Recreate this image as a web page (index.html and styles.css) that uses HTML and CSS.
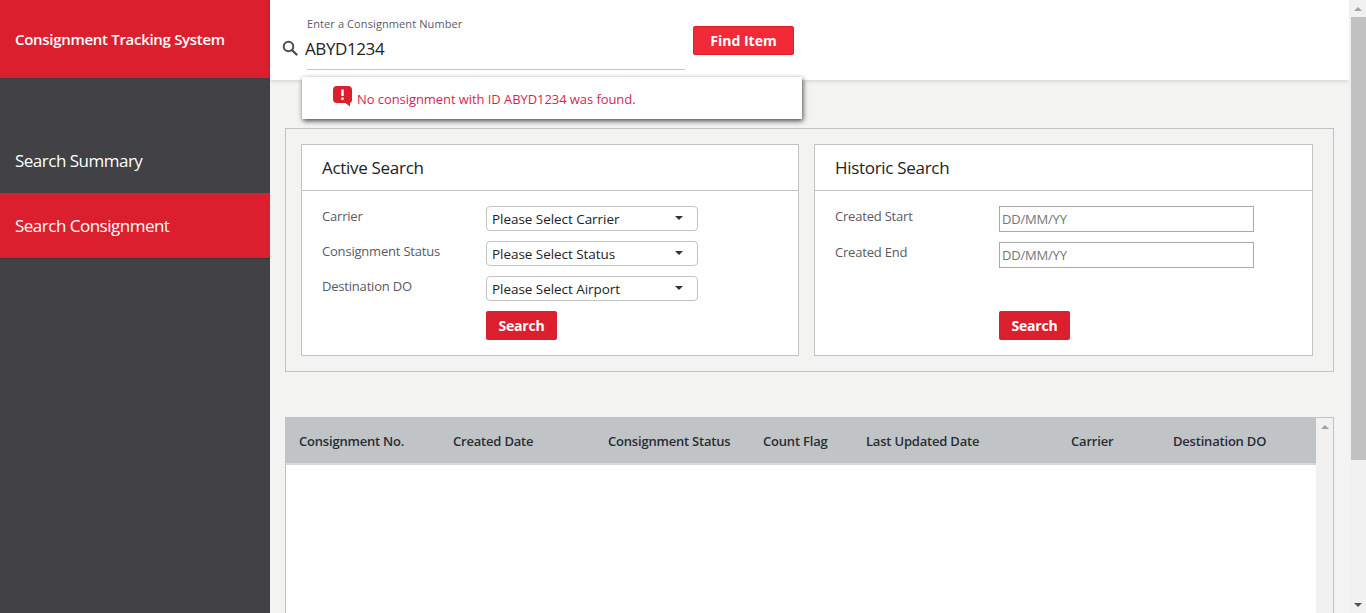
FILE: index.html
```html
<!DOCTYPE html>
<html>

<head>
   <title>Consignment Tracking System</title>
   <link rel="stylesheet" href="styles.css">
</head>

<body>
   <div class="sidebar">
      <div class="brand">Consignment Tracking System</div>
      <div class="nav">
         <a class="nav-item">Search Summary</a>
         <a class="nav-item active">Search Consignment</a>
      </div>
   </div>

   <div class="main">
      <div class="topbar">
         <div class="finder">
            <label class="finder-label" for="consignment">Enter a Consignment Number</label>
            <div class="finder-row">
               <svg class="finder-icon" width="16" height="16" viewBox="0 0 16 16">
                  <circle cx="6.5" cy="6.5" r="4.8" fill="none" stroke="#4a4f55" stroke-width="2" />
                  <path d="M10 10l4.5 4.5" stroke="#4a4f55" stroke-width="2.4" stroke-linecap="round" />
               </svg>
               <input class="finder-input" id="consignment" type="text" value="ABYD1234">
            </div>
            <div class="finder-line"></div>
         </div>
         <button class="btn-find">Find Item</button>
      </div>

      <div class="error-popup">
         <svg class="error-icon" width="19" height="21" viewBox="0 0 19 21">
            <path d="M4 0h11a4 4 0 0 1 4 4v10a3 3 0 0 1-2 3v3.5l-4.500-3.500h-8.500a4 4 0 0 1-4-4v-9a4 4 0 0 1 4-4z" fill="#dc1f2e" />
            <path d="M9.500 3.500v6.500" stroke="#fff" stroke-width="2.400" />
            <rect x="8.300" y="11.500" width="2.400" height="2.400" fill="#fff" />
         </svg>
         <span>No consignment with ID ABYD1234 was found.</span>
      </div>

      <div class="content">
         <div class="search-panel">
            <div class="card">
               <h2 class="card-title">Active Search</h2>
               <div class="card-body">
                  <div class="field">
                     <label>Carrier</label>
                     <div class="select-wrap"><select><option>Please Select Carrier</option></select></div>
                  </div>
                  <div class="field">
                     <label>Consignment Status</label>
                     <div class="select-wrap"><select><option>Please Select Status</option></select></div>
                  </div>
                  <div class="field">
                     <label>Destination DO</label>
                     <div class="select-wrap"><select><option>Please Select Airport</option></select></div>
                  </div>
                  <button class="btn-search">Search</button>
               </div>
            </div>

            <div class="card">
               <h2 class="card-title">Historic Search</h2>
               <div class="card-body">
                  <div class="field">
                     <label>Created Start</label>
                     <input class="date-input" type="text" placeholder="DD/MM/YY">
                  </div>
                  <div class="field">
                     <label>Created End</label>
                     <input class="date-input" type="text" placeholder="DD/MM/YY">
                  </div>
                  <button class="btn-search">Search</button>
               </div>
            </div>
         </div>

         <div class="results">
            <div class="results-table">
               <table>
                  <thead>
                     <tr>
                        <th class="col-number">Consignment No.</th>
                        <th class="col-created">Created Date</th>
                        <th class="col-status">Consignment Status</th>
                        <th class="col-flag">Count Flag</th>
                        <th class="col-updated">Last Updated Date</th>
                        <th class="col-carrier">Carrier</th>
                        <th>Destination DO</th>
                     </tr>
                  </thead>
               </table>
            </div>
            <div class="scrollbar inner-scroll">
               <span class="arrow-up"></span>
            </div>
         </div>
      </div>
   </div>

   <div class="scrollbar page-scroll">
      <span class="arrow-up"></span>
      <div class="thumb"></div>
      <span class="arrow-down"></span>
   </div>
</body>

</html>
```

FILE: styles.css
```css
html,
body {
   height: 100%;
}

body {
   margin: 0;
   display: flex;
   overflow: hidden;
   background: #f3f3f2;
   color: #222;
   font-family: "Open Sans", "Noto Sans", sans-serif;
   font-size: 13px;
}

/* sidebar */
.sidebar {
   width: 270px;
   flex: none;
   background: #414146;
}

.brand {
   height: 78px;
   padding-left: 15px;
   display: flex;
   align-items: center;
   background: #dc1f2e;
   color: #fff;
   font-size: 15px;
   font-weight: 600;
   letter-spacing: -.3px;
}

.nav {
   padding-top: 50px;
}

.nav-item {
   height: 65px;
   padding-left: 15px;
   display: flex;
   align-items: center;
   color: #fff;
   font-size: 17px;
   letter-spacing: -.5px;
}

.nav-item.active {
   background: #dc1f2e;
   box-shadow: 0 1px 0 #38383c;
}

/* top bar */
.main {
   flex: 1;
   min-width: 0;
   position: relative;
   display: flex;
   flex-direction: column;
}

.topbar {
   height: 80px;
   flex: none;
   display: flex;
   background: #fff;
   box-shadow: 0 1px 4px rgba(0, 0, 0, .15);
}

.finder {
   width: 423px;
   padding: 16px 0 0 12px;
   box-sizing: border-box;
}

.finder-label {
   display: block;
   margin-left: 25px;
   height: 15px;
   line-height: 15px;
   font-size: 11px;
   letter-spacing: .1px;
   color: #5a5a64;
}

.finder-row {
   height: 26px;
   margin-top: 4px;
   display: flex;
   align-items: center;
}

.finder-icon {
   flex: none;
   margin-right: 7px;
}

.finder-input {
   width: 380px;
   padding: 0;
   border: 0;
   outline: 0;
   background: none;
   font-family: inherit;
   font-size: 17px;
   letter-spacing: -.4px;
   color: #222;
}

.finder-line {
   height: 1px;
   margin: 8px 0 0 25px;
   width: 378px;
   background: #c4c4c4;
}

.btn-find {
   width: 101px;
   height: 29px;
   margin: 26px 0 0 0;
   padding: 0;
   background: #f22937;
   border: 1px solid #dc1f2e;
   border-radius: 2px;
   color: #fff;
   font-family: inherit;
   font-size: 14px;
   font-weight: 700;
}

.error-popup {
   position: absolute;
   left: 32px;
   top: 77px;
   width: 500px;
   height: 42px;
   padding: 1px 0 0 31px;
   box-sizing: border-box;
   display: flex;
   align-items: center;
   background: #fff;
   color: #d81f4f;
   font-size: 13px;
   letter-spacing: -.07px;
   box-shadow: 1px 2px 5px rgba(0, 0, 0, .7);
}

.error-icon {
   flex: none;
   margin: -5px 5px 0 0;
}

/* search cards */
.content {
   flex: 1;
   min-height: 0;
   padding: 48px 15px 0;
   display: flex;
   flex-direction: column;
}

.search-panel {
   height: 244px;
   flex: none;
   padding: 15px;
   box-sizing: border-box;
   border: 1px solid #c0c4c6;
   display: grid;
   grid-template-columns: 498px 499px;
   grid-template-rows: 212px;
   column-gap: 15px;
}

.card {
   display: flex;
   flex-direction: column;
   background: #fff;
   border: 1px solid #c0c4c6;
   box-sizing: border-box;
}

.card-title {
   height: 45px;
   margin: 0;
   padding-left: 20px;
   display: flex;
   align-items: center;
   flex: none;
   border-bottom: 1px solid #c0c4c6;
   font-size: 17px;
   font-weight: 500;
   letter-spacing: -.3px;
   color: #222;
}

.card-body {
   flex: 1;
   padding: 15px 20px;
   display: flex;
   flex-direction: column;
   gap: 10px;
}

.field {
   display: flex;
   align-items: flex-start;
}

.field label {
   width: 164px;
   flex: none;
   height: 20px;
   line-height: 20px;
   color: #5a5a64;
   letter-spacing: -.2px;
}

.select-wrap {
   position: relative;
   width: 212px;
}

.select-wrap::after {
   content: "";
   position: absolute;
   right: 15px;
   top: 10px;
   border-style: solid;
   border-width: 4px 4px 0;
   border-color: #333 transparent transparent;
   pointer-events: none;
}

.select-wrap select {
   display: block;
   width: 100%;
   height: 25px;
   padding: 0 0 0 5px;
   appearance: none;
   background: #fff;
   border: 1px solid #c4c4c4;
   border-radius: 4px;
   font-family: inherit;
   font-size: 13.500px;
   letter-spacing: -.05px;
   color: #222;
}

.date-input {
   width: 255px;
   height: 26px;
   padding: 0 2px;
   box-sizing: border-box;
   border: 1px solid #a9a9a9;
   font-family: inherit;
   font-size: 13px;
   letter-spacing: -.2px;
}

.date-input::placeholder {
   color: #757575;
   opacity: 1;
}

.btn-search {
   height: 29px;
   width: 71px;
   margin-top: auto;
   margin-left: 164px;
   padding: 0;
   background: #dc1f2e;
   border: 0;
   border-radius: 2px;
   color: #fff;
   font-family: inherit;
   font-size: 14px;
   font-weight: 700;
   letter-spacing: -.2px;
}

/* results */
.results {
   flex: 1;
   min-height: 0;
   margin-top: 45px;
   display: flex;
   border: 1px solid #c0c4c6;
   border-bottom: 0;
   background: #fff;
}

.results-table {
   flex: 1;
   min-width: 0;
}

table {
   width: 100%;
   table-layout: fixed;
   border-spacing: 0;
}

th {
   height: 47px;
   padding: 0 0 0 13px;
   box-sizing: border-box;
   text-align: left;
   background: #c0c4c6;
   border-bottom: 2px solid #d5d8d9;
   font-size: 13px;
   font-weight: 600;
   letter-spacing: -.2px;
   color: #2a2d33;
   white-space: nowrap;
}

.col-number { width: 154px; }
.col-created { width: 155px; }
.col-status { width: 155px; }
.col-flag { width: 103px; }
.col-updated { width: 205px; }
.col-carrier { width: 102px; }

/* scrollbars */
.scrollbar {
   width: 17px;
   flex: none;
   position: relative;
   background: #f1f1f1;
}

.thumb {
   position: absolute;
   top: 17px;
   left: 2px;
   right: 0;
   height: 443px;
   background: #c1c1c1;
}

.arrow-up,
.arrow-down {
   position: absolute;
   left: 5px;
   border-style: solid;
   border-color: transparent;
}

.arrow-up {
   top: 7px;
   border-width: 0 4px 4px;
   border-bottom-color: #a3a3a3;
}

.arrow-down {
   bottom: 6px;
   border-width: 4px 4px 0;
   border-top-color: #505050;
}
```
